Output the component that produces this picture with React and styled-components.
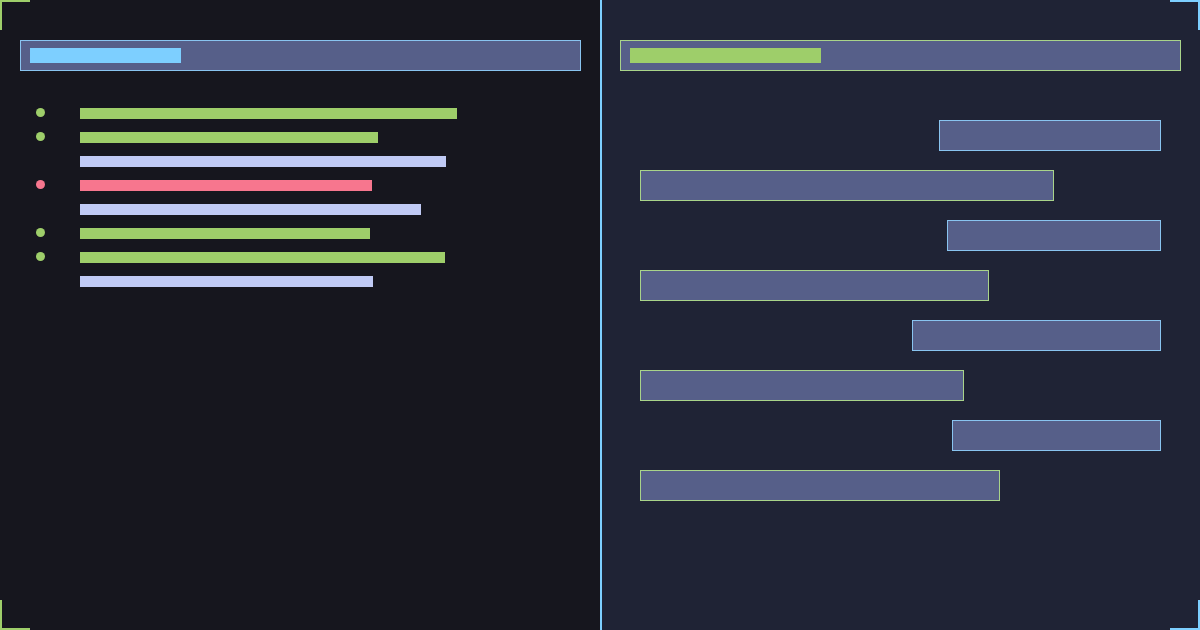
import React from 'react';
import styled, {createGlobalStyle} from 'styled-components';

const GlobalStyle = createGlobalStyle`
    html, body {
        margin: 0;
        padding: 0;
        background: #16161e;
        font-family: "Inter", "Liberation Sans", sans-serif;
    }
`;

const colors = {
    green: '#9ece6a',
    blue: '#7dcfff',
    red: '#f7768e',
    lavender: '#c0caf5',
    slate: '#565f89',
};

const lines = [
    {dot: 'green', color: 'green', width: 377},
    {dot: 'green', color: 'green', width: 298},
    {color: 'lavender', width: 366},
    {dot: 'red', color: 'red', width: 292},
    {color: 'lavender', width: 341},
    {dot: 'green', color: 'green', width: 290},
    {dot: 'green', color: 'green', width: 365},
    {color: 'lavender', width: 293},
];

const bubbles = [
    {side: 'right', width: 222},
    {side: 'left', width: 414},
    {side: 'right', width: 214},
    {side: 'left', width: 349},
    {side: 'right', width: 249},
    {side: 'left', width: 324},
    {side: 'right', width: 209},
    {side: 'left', width: 360},
];

export default function App() {
    return (
        <>
            <GlobalStyle/>
            <Screen>
                <LeftPane>
                    <Header $accent="blue">
                        <HeaderBar $accent="blue" $width={151}/>
                    </Header>
                    <LineList>
                        {lines.map((line, i) => (
                            <Line key={i}>
                                <Dot $color={line.dot}/>
                                <LineBar $color={line.color} style={{width: line.width}}/>
                            </Line>
                        ))}
                    </LineList>
                </LeftPane>
                <RightPane>
                    <Header $accent="green">
                        <HeaderBar $accent="green" $width={191}/>
                    </Header>
                    <Thread>
                        {bubbles.map((b, i) => (
                            <Bubble key={i} $side={b.side} style={{width: b.width}}/>
                        ))}
                    </Thread>
                </RightPane>
                <Corner $pos="tl" $color="green"/>
                <Corner $pos="bl" $color="green"/>
                <Corner $pos="tr" $color="blue"/>
                <Corner $pos="br" $color="blue"/>
            </Screen>
        </>
    );
}

const Screen = styled.div`
    position: relative;
    width: 1200px;
    height: 630px;
    display: flex;
    overflow: hidden;
`;

const LeftPane = styled.div`
    width: 600px;
    box-sizing: border-box;
    padding: 40px 19px 0 20px;
    background: #16161e;
    display: flex;
    flex-direction: column;
`;

const RightPane = styled.div`
    flex: 1;
    box-sizing: border-box;
    padding: 40px 19px 0 18px;
    background: #1f2335;
    border-left: 2px solid ${colors.blue};
    display: flex;
    flex-direction: column;
`;

const Header = styled.div`
    height: 31px;
    box-sizing: border-box;
    padding: 7px 9px;
    background: ${colors.slate};
    border: 1px solid ${p => (p.$accent === 'blue' ? '#89c4f0' : '#a9d48a')};
`;

const HeaderBar = styled.div`
    width: ${p => p.$width}px;
    height: 15px;
    background: ${p => colors[p.$accent]};
`;

const LineList = styled.div`
    margin-top: 37px;
    display: flex;
    flex-direction: column;
    gap: 13px;
`;

const Line = styled.div`
    display: flex;
    align-items: flex-start;
    padding-left: 16px;
    gap: 36px;
`;

const Dot = styled.span`
    width: 9px;
    height: 9px;
    margin-top: 0;
    border-radius: 50%;
    background: ${p => (p.$color ? colors[p.$color] : 'transparent')};
    flex-shrink: 0;
`;

const LineBar = styled.div`
    height: 11px;
    margin-left: -1px;
    background: ${p => colors[p.$color]};
`;

const Thread = styled.div`
    margin-top: 49px;
    padding: 0 20px;
    display: flex;
    flex-direction: column;
    gap: 19px;
`;

const Bubble = styled.div`
    height: 31px;
    box-sizing: border-box;
    background: ${colors.slate};
    border: 1px solid ${p => (p.$side === 'right' ? '#89c4f0' : '#a9d48a')};
    align-self: ${p => (p.$side === 'right' ? 'flex-end' : 'flex-start')};
`;

const Corner = styled.span`
    position: absolute;
    width: 30px;
    height: 30px;
    box-sizing: border-box;
    border: 0 solid ${p => colors[p.$color]};
    ${p => p.$pos[0] === 't' ? 'top: 0; border-top-width: 2px;' : 'bottom: 0; border-bottom-width: 2px;'}
    ${p => p.$pos[1] === 'l' ? 'left: 0; border-left-width: 2px;' : 'right: 0; border-right-width: 2px;'}
`;
